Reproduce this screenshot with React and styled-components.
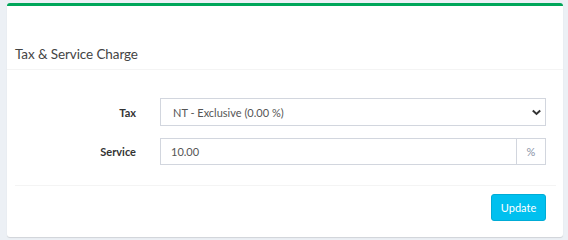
import React from "react"
import styled, { createGlobalStyle } from "styled-components"

const GlobalStyle = createGlobalStyle`
  html, body {
    margin: 0;
    padding: 0;
    background: #ecf0f5;
    font-family: Lato, "Liberation Sans", sans-serif;
  }
  * { box-sizing: border-box; }
`

const Page = styled.div`
  padding: 3px 5px 0 7px;
  height: 240px;
`

const Box = styled.div`
  background: #fff;
  border-top: 3px solid #00a65a;
  border-radius: 3px;
  box-shadow: 0 1px 1px rgba(0, 0, 0, 0.12);
  height: 234px;
  display: flex;
  flex-direction: column;
`

const BoxHeader = styled.div`
  padding: 39px 8px 6px;
  border-bottom: 1px solid #f4f4f4;
`

const Title = styled.h3`
  margin: 0;
  font-size: 13.5px;
  font-weight: 400;
  letter-spacing: -0.1px;
  color: #444;
  line-height: 18px;
`

const BoxBody = styled.div`
  padding: 28px 8px 0;
  display: flex;
  flex-direction: column;
  gap: 12px;
`

const Row = styled.div`
  display: grid;
  grid-template-columns: 121px 1fr;
  column-gap: 24px;
  align-items: center;
  padding-right: 9px;
`

const Label = styled.label`
  text-align: right;
  font-size: 11px;
  font-weight: 700;
  color: #333;
`

const SelectWrap = styled.div`
  position: relative;
  height: 28px;
  border: 1px solid #d2d6de;
  display: flex;
  align-items: center;
  padding: 0 12px;
  font-size: 11px;
  color: #555;
`

const Chevron = styled.svg`
  position: absolute;
  right: 3px;
  top: 10px;
`

const InputGroup = styled.div`
  display: flex;
  height: 27px;
  border: 1px solid #d2d6de;
`

const Input = styled.div`
  flex: 1;
  display: flex;
  align-items: center;
  padding: 0 10px;
  font-size: 11px;
  color: #555;
`

const Addon = styled.div`
  width: 29px;
  border-left: 1px solid #d2d6de;
  display: flex;
  align-items: center;
  justify-content: center;
  font-size: 11px;
  color: #8a93a6;
`

const BoxFooter = styled.div`
  margin: 20px 7px 0 8px;
  border-top: 1px solid #f4f4f4;
  padding: 8px 10px 0 0;
  display: flex;
  justify-content: flex-end;
`

const Button = styled.button`
  width: 55px;
  height: 27px;
  background: #00c0ef;
  border: 1px solid #00acd6;
  border-radius: 3px;
  color: #fff;
  font-family: inherit;
  font-size: 11px;
  padding: 0;
`

export default function App() {
  return (
    <>
      <GlobalStyle />
      <Page>
        <Box>
          <BoxHeader>
            <Title>Tax &amp; Service Charge</Title>
          </BoxHeader>
          <BoxBody>
            <Row>
              <Label>Tax</Label>
              <SelectWrap>
                NT - Exclusive (0.00 %)
                <Chevron width="11" height="7" viewBox="0 0 11 7">
                  <path d="M1.8 1.4 L5.5 4.9 L9.2 1.4" fill="none" stroke="#333" strokeWidth="2" />
                </Chevron>
              </SelectWrap>
            </Row>
            <Row>
              <Label>Service</Label>
              <InputGroup>
                <Input>10.00</Input>
                <Addon>%</Addon>
              </InputGroup>
            </Row>
          </BoxBody>
          <BoxFooter>
            <Button>Update</Button>
          </BoxFooter>
        </Box>
      </Page>
    </>
  )
}
